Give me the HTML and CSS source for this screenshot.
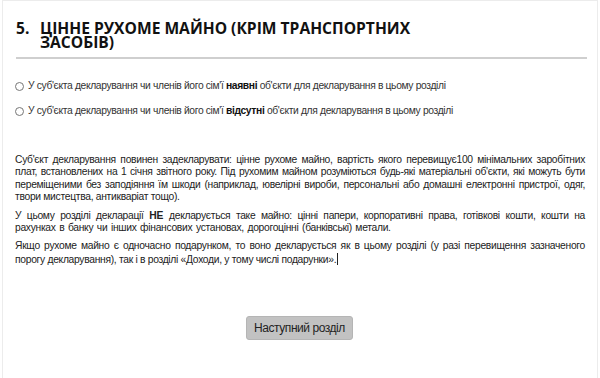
FILE: index.html
```html
<!DOCTYPE html>
<html lang="uk">
<head>
  <meta charset="UTF-8" />
  <title>Цінне рухоме майно</title>
  <link rel="stylesheet" href="styles.css">
</head>
<body>
  <div class="page">
    <h2 class="section-title">
      <span class="num">5.</span>
      <span class="name">ЦІННЕ РУХОМЕ МАЙНО (КРІМ ТРАНСПОРТНИХ ЗАСОБІВ)</span>
    </h2>

    <div class="choices">
      <label class="choice">
        <input type="radio" name="has">
        <span>У суб'єкта декларування чи членів його сім'ї <b>наявні</b> об'єкти для декларування в цьому розділі</span>
      </label>
      <label class="choice">
        <input type="radio" name="has">
        <span>У суб'єкта декларування чи членів його сім'ї <b>відсутні</b> об'єкти для декларування в цьому розділі</span>
      </label>
    </div>

    <div class="info">
      <p>Суб'єкт декларування повинен задекларувати: цінне рухоме майно, вартість якого перевищує100 мінімальних заробітних плат, встановлених на 1 січня звітного року. Під рухомим майном розуміються будь-які матеріальні об'єкти, які можуть бути переміщеними без заподіяння їм шкоди (наприклад, ювелірні вироби, персональні або домашні електронні пристрої, одяг, твори мистецтва, антикваріат тощо).</p>
      <p class="warn">У цьому розділі декларації <b>НЕ</b> декларується таке майно: цінні папери, корпоративні права, готівкові кошти, кошти на рахунках в банку чи інших фінансових установах, дорогоцінні (банківські) метали.</p>
      <p>Якщо рухоме майно є одночасно подарунком, то воно декларується як в цьому розділі (у разі перевищення зазначеного порогу декларування), так і в розділі «Доходи, у тому числі подарунки».<span class="caret"></span></p>
    </div>

    <div class="actions">
      <button class="btn">Наступний розділ</button>
    </div>
  </div>
</body>
</html>
```

FILE: styles.css
```css
body {
  margin: 0;
  background: #fff;
  font-family: "Liberation Sans", Arial, sans-serif;
  color: #333;
}

.page {
  margin: 0 2px;
  height: 378px;
  box-sizing: border-box;
  border: 1px solid #ececec;
  border-bottom: none;
  padding: 20px 12px 0 12px;
}

.section-title {
  display: flex;
  margin: 0 0 0 1px;
  padding-bottom: 8px;
  border-bottom: 2px solid #cfcfcf;
  width: 571px;
  font-family: "Open Sans", sans-serif;
  font-weight: 700;
  font-size: 15.6px;
  line-height: 14px;
  color: #111;
}

.section-title .num {
  width: 24px;
  flex: none;
}

.section-title .name {
  max-width: 400px;
}

.choices {
  margin-top: 20px;
  display: flex;
  flex-direction: column;
  gap: 11px;
}

.choice {
  display: flex;
  align-items: center;
  font-size: 10.3px;
  letter-spacing: -0.35px;
  line-height: 14px;
  color: #333;
}

.choice input {
  margin: 0 4px 0 0;
  width: 9px;
  height: 9px;
}

.choice b {
  color: #111;
}

.info {
  margin-top: 36px;
  width: 570px;
  font-size: 10.3px;
  letter-spacing: -0.3px;
  line-height: 12.4px;
  color: #222;
  text-align: justify;
}

.info p {
  margin: 0 0 6px 0;
}

.info .warn {
  word-spacing: 1px;
}

.info b {
  letter-spacing: 0;
}

.caret {
  display: inline-block;
  width: 1px;
  height: 12px;
  background: #222;
  vertical-align: -2px;
  margin-left: 1px;
}

.actions {
  margin-top: 50px;
  display: flex;
  justify-content: center;
  padding-right: 1px;
}

.btn {
  width: 107px;
  height: 24px;
  padding: 0;
  white-space: nowrap;
  background: #c2c2c2;
  border: 1px solid #b5b5b5;
  border-radius: 3px;
  font-family: "Liberation Sans", Arial, sans-serif;
  font-size: 12px;
  letter-spacing: -0.45px;
  color: #222;
  cursor: pointer;
}
```
